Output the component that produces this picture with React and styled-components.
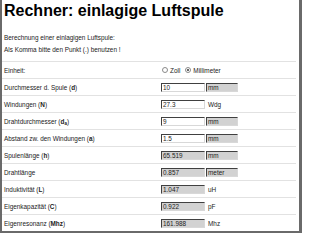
import React from "react";
import styled, { createGlobalStyle } from "styled-components";

const Global = createGlobalStyle`
  html, body { margin: 0; padding: 0; background: #fff; }
  body { font-family: "Liberation Sans", Arial, sans-serif; color: #222; }
`;

const Frame = styled.div`
  box-sizing: border-box;
  width: 302px;
  height: 233px;
  overflow: hidden;
  border-left: 2px solid #6a6a6a;
  border-right: 3px solid #6a6a6a;
  border-bottom: 2px solid #6a6a6a;
  padding: 0 3px 0 0;
`;

const Title = styled.h1`
  margin: 2px 0 0 2px;
  font-size: 16px;
  line-height: 18px;
  font-weight: bold;
  color: #000;
`;

const Intro = styled.div`
  margin: 12px 0 0 2px;
  font-size: 6.4px;
  line-height: 11.5px;
  color: #222;
  height: 29px;
`;

const Row = styled.div`
  display: grid;
  grid-template-columns: 156px 44px 32px;
  column-gap: 1px;
  align-items: center;
  height: 17px;
  border-top: 1px solid #e2e2e2;
  box-sizing: border-box;
  padding-left: 2px;
  font-size: 6.4px;
  color: #222;
`;

const Label = styled.div`
  white-space: nowrap;
  b { font-weight: bold; }
  sub { font-size: 4.5px; vertical-align: -1px; line-height: 0; }
`;

const Radios = styled.div`
  grid-column: 2 / span 2;
  display: flex;
  align-items: center;
  gap: 2px;
  padding-left: 1px;
`;

const Radio = styled.span`
  box-sizing: border-box;
  width: 6px;
  height: 6px;
  border-radius: 50%;
  border: 1px solid #8a8a8a;
  background: #fff;
  display: inline-flex;
  align-items: center;
  justify-content: center;
  margin-left: ${(p) => (p.$first ? 0 : 3)}px;
  &::after {
    content: "";
    width: 2px;
    height: 2px;
    border-radius: 50%;
    background: ${(p) => (p.$checked ? "#333" : "transparent")};
  }
`;

const Box = styled.div`
  box-sizing: border-box;
  height: 9px;
  border-top: 1px solid #404040;
  border-left: 1px solid #404040;
  border-right: 1px solid #d8d8d8;
  border-bottom: 1px solid #d8d8d8;
  background: ${(p) => (p.$gray ? "#d2d2d2" : "#fff")};
  padding-left: 1px;
  line-height: 7px;
  font-size: 6.4px;
  color: #222;
  white-space: nowrap;
  overflow: hidden;
`;

const UnitText = styled.div`
  padding-left: 2px;
  white-space: nowrap;
`;

const rows = [
  { label: <>Durchmesser d. Spule (<b>d</b>)</>, value: "10", unit: "mm", inGray: false, unitBox: true },
  { label: <>Windungen (<b>N</b>)</>, value: "27.3", unit: "Wdg", inGray: false, unitBox: false },
  { label: <>Drahtdurchmesser (<b>d<sub>a</sub></b>)</>, value: "9", unit: "mm", inGray: false, unitBox: true },
  { label: <>Abstand zw. den Windungen (<b>a</b>)</>, value: "1.5", unit: "mm", inGray: false, unitBox: true },
  { label: <>Spulenlänge (<b>h</b>)</>, value: "65.519", unit: "mm", inGray: true, unitBox: true },
  { label: <>Drahtlänge</>, value: "0.857", unit: "meter", inGray: true, unitBox: true },
  { label: <>Induktivität (<b>L</b>)</>, value: "1.047", unit: "uH", inGray: true, unitBox: false },
  { label: <>Eigenkapazität (<b>C</b>)</>, value: "0.922", unit: "pF", inGray: true, unitBox: false },
  { label: <>Eigenresonanz (<b>Mhz</b>)</>, value: "161.988", unit: "Mhz", inGray: true, unitBox: false },
];

export default function App() {
  return (
    <>
      <Global />
      <Frame>
        <Title>Rechner: einlagige Luftspule</Title>
        <Intro>
          Berechnung einer einlagigen Luftspule:
          <br />
          Als Komma bitte den Punkt (.) benutzen !
        </Intro>
        <Row>
          <Label>Einheit:</Label>
          <Radios>
            <Radio $first />
            <span>Zoll</span>
            <Radio $checked />
            <span>Millimeter</span>
          </Radios>
        </Row>
        {rows.map((r, i) => (
          <Row key={i}>
            <Label>{r.label}</Label>
            <Box $gray={r.inGray}>{r.value}</Box>
            {r.unitBox ? <Box $gray>{r.unit}</Box> : <UnitText>{r.unit}</UnitText>}
          </Row>
        ))}
      </Frame>
    </>
  );
}
